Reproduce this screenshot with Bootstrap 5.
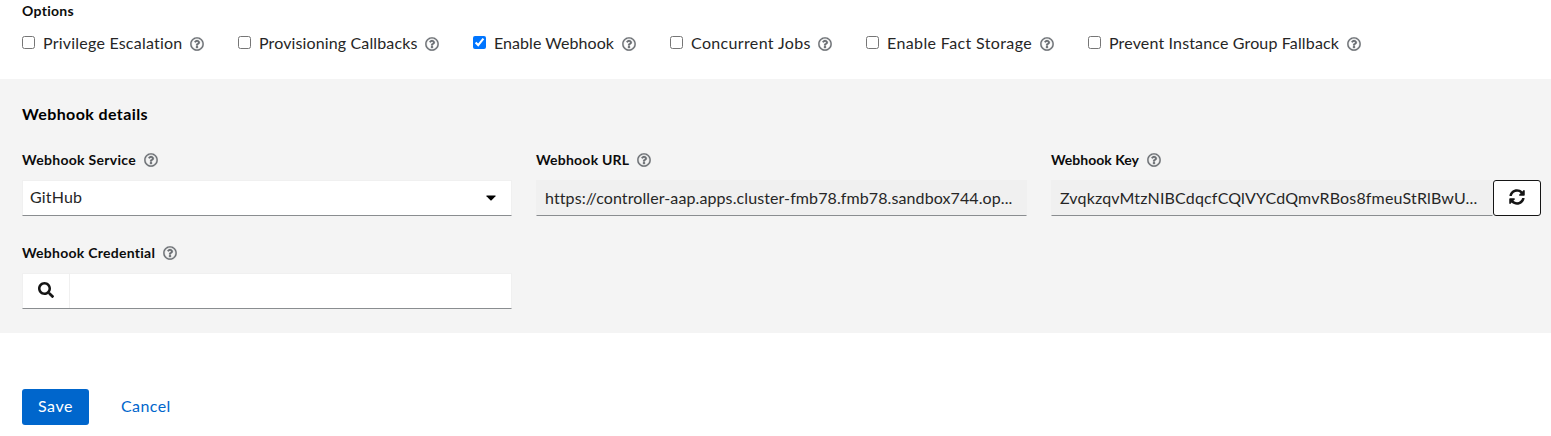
<!DOCTYPE html>
<html lang="en">
<head>
<meta charset="utf-8">
<meta name="viewport" content="width=device-width, initial-scale=1">
<title>Job template options</title>
<link href="https://cdn.jsdelivr.net/npm/bootstrap@5.3.0/dist/css/bootstrap.min.css" rel="stylesheet">
<style>
  body { font-family: Lato, sans-serif; font-size: 16px; line-height: 24px; letter-spacing: .17px; color: #262626; background: #fff; font-variant-ligatures: none; overflow: hidden; }
  .options { height: 79px; padding-left: 22px; }
  .field-title { font-size: 14px; font-weight: 700; line-height: 21px; letter-spacing: .3px; color: #0c0c0c; }
  .options .field-title { margin-bottom: 10px; }
  .option-list { gap: 34px; }
  .option-item input { width: 13px; height: 13px; margin: 5px 8px 0 0; flex: none; }
  .option-item label { white-space: nowrap; }
  .help { width: 14px; height: 14px; fill: #6a6e73; stroke: #6a6e73; stroke-width: 10; flex: none; display: block; overflow: visible; }
  .option-item .help { margin-top: 6px; }
  .w-escalation { width: 147px; letter-spacing: .22px; } .w-callbacks { width: 166px; letter-spacing: .13px; }
  .w-webhook { width: 128px; letter-spacing: .05px; } .w-jobs { width: 127px; letter-spacing: .35px; }
  .w-facts { width: 153px; letter-spacing: .38px; } .w-fallback { width: 238px; letter-spacing: .15px; }
  .webhook { background: #f4f4f4; height: 254px; padding: 23px 10px 0 22px; }
  .webhook h2 { font-size: 16px; font-weight: 700; line-height: 24px; letter-spacing: .4px; margin: 0 0 23px; color: #000; }
  .webhook-grid { display: grid; grid-template-columns: 489.5px 490.5px minmax(0, 1fr); column-gap: 24.5px; row-gap: 26px; }
  .title-row { height: 21px; gap: 8px; margin-bottom: 10px; }
  .title-url { letter-spacing: .23px; } .title-key { letter-spacing: 0; } .title-cred { letter-spacing: .26px; }
  .field-box { height: 36px; background: #fff; border: 1px solid #f0f0f0; border-bottom-color: #8a8d90; }
  .field-locked { background: #f0f0f0; padding: 0 8px; line-height: 34px; }
  .url-text { letter-spacing: .1px; }
  .field-select { padding: 0 15px 2px 7px; }
  .field-select svg { margin-top: 2px; }
  .search-part { width: 47px; border-right: 1px solid #f0f0f0; padding-bottom: 2px; }
  .btn-sync { width: 48px; height: 36px; border: 1px solid #151515; border-radius: 3px; background: #fff; padding: 0 0 2px; flex: none; }
  .actions { padding: 56px 0 0 22px; gap: 15px; }
  .actions .btn { height: 36px; padding: 4px 16px 6px; border: 1px solid transparent; border-radius: 3px; line-height: 24px; letter-spacing: .4px; }
  .actions .btn-primary { width: 67px; padding: 4px 0 6px; background: #06c; letter-spacing: .6px; }
  .actions .btn-link { color: #06c; text-decoration: none; }
</style>
<script src="https://cdn.jsdelivr.net/npm/bootstrap@5.3.0/dist/js/bootstrap.bundle.min.js"></script>
</head>
<body>
<svg class="d-none">
  <symbol id="question" viewBox="0 0 512 512"><path d="M256 8C119.043 8 8 119.083 8 256c0 136.997 111.043 248 248 248s248-111.003 248-248C504 119.083 392.957 8 256 8zm0 448c-110.532 0-200-89.431-200-200 0-110.495 89.472-200 200-200 110.491 0 200 89.471 200 200 0 110.53-89.431 200-200 200zm107.244-255.2c0 67.052-72.421 68.084-72.421 92.863V300c0 6.627-5.373 12-12 12h-45.647c-6.627 0-12-5.373-12-12v-8.659c0-35.745 27.1-50.034 47.579-61.516 17.561-9.845 28.324-16.541 28.324-29.579 0-17.246-21.999-28.693-39.784-28.693-23.189 0-33.894 10.977-48.942 29.969-4.057 5.12-11.46 6.071-16.666 2.124l-27.824-21.098c-5.107-3.872-6.251-11.066-2.644-16.363C184.846 131.491 214.94 112 261.794 112c49.071 0 101.45 38.304 101.45 88.8zM298 368c0 23.159-18.841 42-42 42s-42-18.841-42-42 18.841-42 42-42 42 18.841 42 42z"/></symbol>
</svg>

<section class="options">
  <div class="field-title">Options</div>
  <div class="option-list d-flex">
    <div class="option-item d-flex"><input type="checkbox" id="o1"><label class="w-escalation" for="o1">Privilege Escalation</label><svg class="help"><use href="#question"/></svg></div>
    <div class="option-item d-flex"><input type="checkbox" id="o2"><label class="w-callbacks" for="o2">Provisioning Callbacks</label><svg class="help"><use href="#question"/></svg></div>
    <div class="option-item d-flex"><input type="checkbox" id="o3" checked><label class="w-webhook" for="o3">Enable Webhook</label><svg class="help"><use href="#question"/></svg></div>
    <div class="option-item d-flex"><input type="checkbox" id="o4"><label class="w-jobs" for="o4">Concurrent Jobs</label><svg class="help"><use href="#question"/></svg></div>
    <div class="option-item d-flex"><input type="checkbox" id="o5"><label class="w-facts" for="o5">Enable Fact Storage</label><svg class="help"><use href="#question"/></svg></div>
    <div class="option-item d-flex"><input type="checkbox" id="o6"><label class="w-fallback" for="o6">Prevent Instance Group Fallback</label><svg class="help"><use href="#question"/></svg></div>
  </div>
</section>

<section class="webhook">
  <h2>Webhook details</h2>
  <div class="webhook-grid">
    <div>
      <div class="title-row d-flex align-items-center"><span class="field-title">Webhook Service</span><svg class="help"><use href="#question"/></svg></div>
      <div class="field-box field-select d-flex align-items-center justify-content-between"><span>GitHub</span><svg width="10" height="6" viewBox="0 0 10 6"><path d="M.8.5h8.4q.8.1.3.8L5.6 5.2q-.6.5-1.2 0L.5 1.3Q0 .6.8.5z" fill="#000"/></svg></div>
    </div>
    <div>
      <div class="title-row d-flex align-items-center"><span class="field-title title-url">Webhook URL</span><svg class="help"><use href="#question"/></svg></div>
      <div class="field-box field-locked url-text text-truncate">https://controller-aap.apps.cluster-fmb78.fmb78.sandbox744.op...</div>
    </div>
    <div>
      <div class="title-row d-flex align-items-center"><span class="field-title title-key">Webhook Key</span><svg class="help"><use href="#question"/></svg></div>
      <div class="d-flex">
        <div class="field-box field-locked flex-grow-1 text-nowrap">ZvqkzqvMtzNIBCdqcfCQlVYCdQmvRBos8fmeuStRlBwU...</div>
        <button class="btn btn-sync d-flex align-items-center justify-content-center" type="button" aria-label="Update webhook key"><svg width="16" height="16" viewBox="0 0 512 512" fill="#151515"><path d="M370.72 133.28C339.458 104.008 298.888 87.962 255.848 88c-77.458.068-144.328 53.178-162.791 126.85-1.344 5.363-6.122 9.15-11.651 9.15H24.103c-7.498 0-13.194-6.807-11.807-14.176C33.933 94.924 134.813 8 256 8c66.448 0 126.791 26.136 171.315 68.685L463.03 40.97C478.149 25.851 504 36.559 504 57.941V192c0 13.255-10.745 24-24 24H345.941c-21.382 0-32.09-25.851-16.971-40.971l41.75-41.749zM32 296h134.059c21.382 0 32.09 25.851 16.971 40.971l-41.75 41.75c31.262 29.273 71.835 45.319 114.876 45.28 77.418-.07 144.315-53.144 162.787-126.849 1.344-5.363 6.122-9.15 11.651-9.15h57.304c7.498 0 13.194 6.807 11.807 14.176C478.067 417.076 377.187 504 256 504c-66.448 0-126.791-26.136-171.315-68.685L48.97 471.03C33.851 486.149 8 475.441 8 454.059V320c0-13.255 10.745-24 24-24z"/></svg></button>
      </div>
    </div>
    <div>
      <div class="title-row d-flex align-items-center"><span class="field-title title-cred">Webhook Credential</span><svg class="help"><use href="#question"/></svg></div>
      <div class="field-box d-flex">
        <div class="search-part d-flex align-items-center justify-content-center"><svg width="16" height="16" viewBox="0 0 512 512" fill="#151515"><path d="M505 442.7L405.3 343c-4.5-4.5-10.6-7-17-7H372c27.6-35.3 44-79.7 44-128C416 93.1 322.9 0 208 0S0 93.1 0 208s93.1 208 208 208c48.3 0 92.7-16.4 128-44v16.3c0 6.4 2.5 12.5 7 17l99.7 99.7c9.4 9.4 24.6 9.4 33.9 0l28.3-28.3c9.4-9.4 9.4-24.6.1-34zM208 336c-70.7 0-128-57.2-128-128 0-70.7 57.2-128 128-128 70.7 0 128 57.2 128 128 0 70.7-57.2 128-128 128z"/></svg></div>
        <div class="flex-grow-1"></div>
      </div>
    </div>
  </div>
</section>

<div class="actions d-flex">
  <button class="btn btn-primary" type="button">Save</button>
  <button class="btn btn-link" type="button">Cancel</button>
</div>
</body>
</html>
